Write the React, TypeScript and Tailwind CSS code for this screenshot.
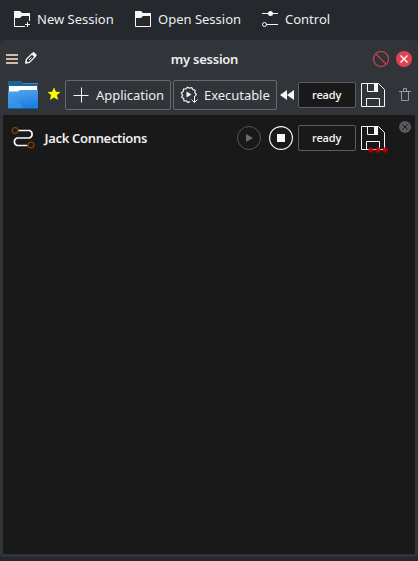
import React from 'react';

function FolderIcon({ add = false }: { add?: boolean }) {
  return (
    <svg width="18" height="18" viewBox="0 0 18 18" className="shrink-0">
      <path d="M1 1h6l2 2h8v3H9L7 8H1z" fill="#f5f6f7" />
      {add ? (
        <path d="M1.500 4v12.500H12M16.500 4v7M14.500 12v5M12 14.500h5" fill="none" stroke="#f5f6f7" />
      ) : (
        <path d="M1.500 4v12.500h15V4" fill="none" stroke="#f5f6f7" />
      )}
    </svg>
  );
}

function ControlIcon() {
  return (
    <svg width="18" height="18" viewBox="0 0 18 18" className="shrink-0">
      <path d="M1 3.500h16M5 14.500h12" stroke="#f5f6f7" />
      <circle cx="9.500" cy="3.500" r="2.500" fill="#f5f6f7" />
      <circle cx="3.500" cy="14.500" r="2" fill="none" stroke="#f5f6f7" />
    </svg>
  );
}

function FloppyIcon() {
  return (
    <svg width="24" height="24" viewBox="0 0 24 24" className="block">
      <path d="M.5.5h17l6 6v17H.5z" fill="none" stroke="#f5f6f7" />
      <path d="M6.500.5v8h10v-8M5.500 23.500v-8h13v8" fill="none" stroke="#f5f6f7" />
      <path d="M13 0h4v9h-4z" fill="#f5f6f7" />
    </svg>
  );
}

function BlueFolder() {
  return (
    <svg width="30" height="28" viewBox="0 0 30 28" className="shrink-0">
      <defs>
        <linearGradient id="folder" x1="0" y1="0" x2="0.300" y2="1">
          <stop stopColor="#55a7ed" />
          <stop offset="1" stopColor="#1d7fe2" />
        </linearGradient>
      </defs>
      <path d="M0 0h13l2 2h15v17H0z" fill="#1c6394" />
      <path d="M15 2.500h15" stroke="#3a86b8" />
      <path d="M1 5h28v8H1z" fill="#fff" />
      <path d="M0 10.500h10l2-1.500h18v19H0z" fill="url(#folder)" />
      <path d="M0 11l17 17H0z" fill="#3e9bea" opacity=".6" />
      <path d="M0 27.500h30" stroke="#185f9e" />
    </svg>
  );
}

function GearPlay() {
  return (
    <svg width="18" height="18" viewBox="0 0 18 18" className="shrink-0">
      <path
        d="M10 15.500l-2 1-1.700-1.600-2.300.1-.3-2.400-2-1.300L2.600 9 1.300 7l1.900-1.500L3.500 3l2.400-.1L7.500 1.200l2.100 1 2.200-.6 1 2 2.200.7-.2 2.300 1.500 1.700-1.100 2"
        fill="none"
        stroke="#f5f6f7"
        strokeWidth="1.200"
      />
      <path d="M6.500 5.500L11.500 8.500l-5 3z" fill="#f5f6f7" />
      <path d="M14.500 10v6.500M11.500 13.500l3 3 3-3" fill="none" stroke="#f5f6f7" />
    </svg>
  );
}

function ToolItem({ children, label }: { children: React.ReactNode; label: string }) {
  return (
    <div className="flex items-center gap-[6px]">
      {children}
      <span>{label}</span>
    </div>
  );
}

function Status() {
  return (
    <div className="flex h-[26px] w-[58px] shrink-0 items-center justify-center rounded-[2px] border border-[#5b5e62] bg-[#19191a] pb-[1px] pr-[1px] font-['Open_Sans',sans-serif] text-[11px] font-semibold leading-none tracking-[-0.2px] text-[#f1f2f3]">
      ready
    </div>
  );
}

export default function App() {
  return (
    <div className="flex h-[561px] w-[418px] flex-col overflow-hidden bg-[#25282d] font-['Noto_Sans','Open_Sans',sans-serif] text-[13px] leading-[18px] text-[#eceef0]">
      <nav className="flex h-10 items-center pb-[2px] pl-[13px]">
        <div className="w-[121px]"><ToolItem label="New Session"><FolderIcon add /></ToolItem></div>
        <div className="w-[127px]"><ToolItem label="Open Session"><FolderIcon /></ToolItem></div>
        <ToolItem label="Control"><ControlIcon /></ToolItem>
      </nav>
      <main className="flex h-[517px] flex-col rounded-[4px] bg-[#313439] px-[3px] pb-[3px]">
        <header className="flex h-[35px] items-center pl-[3px] pr-[3px] pt-[2px]">
          <div className="flex w-[126px] items-center gap-[6px]">
            <svg width="12" height="12" viewBox="0 0 12 12"><path d="M0 2h12M0 6h12M0 10h12" stroke="#d5baa8" strokeWidth="2" /></svg>
            <svg width="14" height="14" viewBox="0 0 14 14" className="mb-[1px]">
              <path d="M1.800 12l.6-3.600 5.800-5.800 3 3-5.800 5.800z" fill="none" stroke="#f5f6f7" strokeWidth="1.300" />
              <path d="M7.300 3L9.600.7 13 4.100l-2.300 2.400zM1.300 12.500l.7-3.200 2.400 2.400z" fill="#f5f6f7" />
              <path d="M5 9l2.500-2.500" stroke="#f5f6f7" />
            </svg>
          </div>
          <h1 className="flex-1 pr-[9px] text-center font-semibold tracking-[-0.25px]">my session</h1>
          <div className="flex w-[126px] justify-end gap-[6px]">
            <svg width="18" height="18" viewBox="0 0 18 18"><circle cx="9" cy="9" r="7.500" fill="none" stroke="#da4453" strokeWidth="1.100" /><path d="M3.800 3.800l10.400 10.400" stroke="#da4453" strokeWidth="1.100" /></svg>
            <svg width="16" height="18" viewBox="0 0 16 18"><circle cx="8" cy="9" r="8" fill="#e04351" /><path d="M4.500 5.500l7 7M11.500 5.500l-7 7" stroke="#fff" strokeWidth="1.300" /></svg>
          </div>
        </header>
        <section className="flex h-10 shrink-0 items-center pl-[5px]">
          <BlueFolder />
          <svg width="12" height="12" viewBox="0 0 12 12" className="mb-[2px] ml-[10px] shrink-0"><path d="M6 0l1.700 4 4.300.3-3.300 2.800 1 4.400L6 9.200l-3.700 2.300 1-4.400L0 4.300 4.300 4z" fill="#ff0" stroke="#ff0" strokeWidth=".5" /></svg>
          <div className="ml-[5px] flex h-[30px] w-[106px] shrink-0 items-center gap-[7px] rounded-[2px] border border-[#66696e] pl-[7px]">
            <svg width="16" height="16" viewBox="0 0 16 16"><path d="M.5 8.500h15M8.500.5v15" stroke="#f5f6f7" /></svg>
            <span className="tracking-[-0.04px]">Application</span>
          </div>
          <div className="ml-[2px] flex h-[30px] w-[104px] shrink-0 items-center gap-[6px] rounded-[2px] border border-[#66696e] pl-[6px]">
            <GearPlay />
            <span className="tracking-[-0.04px]">Executable</span>
          </div>
          <svg width="14" height="10" viewBox="0 0 14 10" className="ml-[3px] mr-[4px] shrink-0"><path d="M7 0v10L0 5zM14 0v10L7 5z" fill="#f5f6f7" /></svg>
          <Status />
          <div className="ml-[5px]"><FloppyIcon /></div>
          <svg width="12" height="13" viewBox="0 0 12 13" className="mb-[1px] ml-[14px] shrink-0"><path d="M0 3.500h12M4.500 3V.5h3V3M2.500 3.500v9h7v-9" fill="none" stroke="#96999c" /></svg>
        </section>
        <section className="flex-1 bg-[#191919]">
          <div className="flex h-[45px] items-center pl-[8px]">
            <svg width="24" height="22" viewBox="0 0 24 22" className="mt-[1px] shrink-0">
              <path d="M6.500 3.500H18.500a4 4 0 0 1 0 7.500H6a4 4 0 0 0 0 7.500h10.500" fill="none" stroke="#f5f6f7" strokeWidth="1.700" />
              <circle cx="4" cy="3.500" r="2.900" fill="#191919" stroke="#803e08" strokeWidth="1.300" />
              <circle cx="20" cy="18" r="2.900" fill="#191919" stroke="#803e08" strokeWidth="1.300" />
            </svg>
            <h2 className="ml-[9.500px] w-[192.500px] font-semibold tracking-[-0.33px]">Jack Connections</h2>
            <svg width="24" height="24" viewBox="0 0 24 24" className="shrink-0"><circle cx="12" cy="12" r="11.500" fill="none" stroke="#55575a" /><path d="M9 8l7 4-7 4z" fill="#696c6f" /></svg>
            <svg width="24" height="24" viewBox="0 0 24 24" className="ml-[8px] mr-[5px] shrink-0"><circle cx="12" cy="12" r="11.400" fill="none" stroke="#f5f6f7" strokeWidth="1.200" /><path d="M8 8h8v8H8z" fill="#f5f6f7" /></svg>
            <Status />
            <div className="relative ml-[5px]">
              <FloppyIcon />
              <svg width="20" height="6" viewBox="0 0 20 6" className="absolute left-[7px] top-[21px]">
                <g fill="#b80006" fillOpacity=".85"><circle cx="3" cy="3" r="2.700" /><circle cx="10" cy="3" r="2.700" /><circle cx="17.200" cy="3" r="2.700" /></g>
              </svg>
            </div>
            <svg width="12" height="12" viewBox="0 0 12 12" className="mb-[21px] ml-[14px] shrink-0"><circle cx="6" cy="6" r="6" fill="#57595c" /><path d="M3.300 3.300l5.400 5.400M8.700 3.300L3.300 8.700" stroke="#19191a" /></svg>
          </div>
        </section>
      </main>
    </div>
  );
}
